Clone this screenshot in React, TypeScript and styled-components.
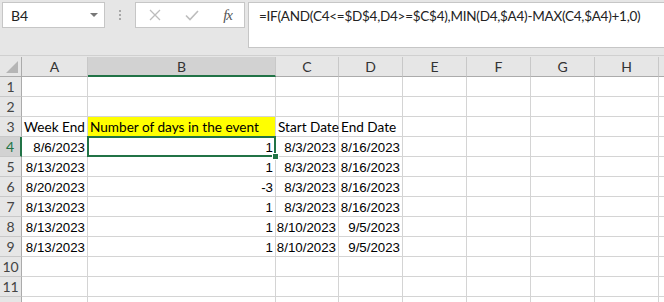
import styled, { createGlobalStyle, css } from 'styled-components';

const GlobalStyle = createGlobalStyle`
  html, body {
    margin: 0;
    padding: 0;
    background: #e6e6e6;
    overflow: hidden;
  }
`;

const CAL = `Lato, "Open Sans", sans-serif`;
const ARIAL = `"Liberation Sans", Arial, sans-serif`;

const COLS = ['A', 'B', 'C', 'D', 'E', 'F', 'G', 'H', ''];
const WIDTHS = '22px 66px 188px 63px 64px 64px 64px 64px 64px 64px';

type Row = { a?: string; b?: string; c?: string; d?: string; head?: boolean };

const rows: Row[] = [
  {},
  {},
  { a: 'Week End', b: 'Number of days in the event', c: 'Start Date', d: 'End Date', head: true },
  { a: '8/6/2023', b: '1', c: '8/3/2023', d: '8/16/2023' },
  { a: '8/13/2023', b: '1', c: '8/3/2023', d: '8/16/2023' },
  { a: '8/20/2023', b: '-3', c: '8/3/2023', d: '8/16/2023' },
  { a: '8/13/2023', b: '1', c: '8/3/2023', d: '8/16/2023' },
  { a: '8/13/2023', b: '1', c: '8/10/2023', d: '9/5/2023' },
  { a: '8/13/2023', b: '1', c: '8/10/2023', d: '9/5/2023' },
  {},
  {},
];

const Window = styled.div`
  width: 664px;
  height: 302px;
  overflow: hidden;
  background: #e6e6e6;
`;

/* ~~~ formula bar ~~~ */
const FormulaRow = styled.div`
  display: flex;
  align-items: flex-start;
  height: 56px;
  padding: 2px 0 0 2px;
  box-sizing: border-box;
  border-bottom: 1px solid #d0d0d0;
`;

const NameBox = styled.div`
  flex: none;
  width: 103px;
  height: 26px;
  box-sizing: border-box;
  background: #fff;
  border: 1px solid #c6c6c6;
  display: flex;
  align-items: center;
  justify-content: space-between;
  padding: 0 6px 0 8px;
  font: 14px ${CAL};
  color: #222;
`;

const Arrow = styled.span`
  width: 0;
  height: 0;
  border-left: 4px solid transparent;
  border-right: 4px solid transparent;
  border-top: 4px solid #777;
`;

const Grip = styled.div`
  flex: none;
  width: 30px;
  height: 26px;
  display: flex;
  flex-direction: column;
  align-items: center;
  justify-content: center;
  gap: 2px;

  span {
    width: 2px;
    height: 2px;
    background: #a8a8a8;
  }
`;

const ButtonBox = styled.div`
  flex: none;
  width: 110px;
  height: 26px;
  box-sizing: border-box;
  background: #fff;
  border: 1px solid #c6c6c6;
  display: flex;
  align-items: center;
  justify-content: space-between;
  padding: 0 12px 0 13px;
`;

const Fx = styled.span`
  font: italic 15px "Liberation Serif", serif;
  color: #555;
  letter-spacing: -1px;
`;

const FormulaInput = styled.div`
  flex: 1;
  min-width: 0;
  overflow: hidden;
  height: 46px;
  margin-left: 3px;
  box-sizing: border-box;
  background: #fff;
  border: 1px solid #c6c6c6;
  border-right: none;
  padding: 5px 0 0 10px;
  font: 13.5px ${CAL};
  letter-spacing: -0.25px;
  color: #222;
  white-space: nowrap;
`;

/* ~~~ sheet grid ~~~ */
const Sheet = styled.div`
  display: grid;
  grid-template-columns: ${WIDTHS};
  grid-auto-rows: 20px;
  margin-top: 1px;
`;

const Corner = styled.div`
  position: relative;
  background: #e6e6e6;
  border-right: 1px solid #ababab;
  border-bottom: 1px solid #ababab;

  &::after {
    content: '';
    position: absolute;
    right: 3px;
    bottom: 3px;
    width: 0;
    height: 0;
    border-left: 12px solid transparent;
    border-bottom: 12px solid #b5b5b5;
  }
`;

const ColHead = styled.div<{ $sel?: boolean }>`
  background: ${(p) => (p.$sel ? '#d2d2d2' : '#e6e6e6')};
  border-right: 1px solid #c8c8c8;
  border-bottom: ${(p) => (p.$sel ? '2px solid #217346' : '1px solid #ababab')};
  display: flex;
  align-items: center;
  justify-content: center;
  font: 14px ${CAL};
  color: #333;
  box-sizing: border-box;
  padding-top: ${(p) => (p.$sel ? '1px' : '0')};
`;

const RowHead = styled.div<{ $sel?: boolean }>`
  background: ${(p) => (p.$sel ? '#d2d2d2' : '#e6e6e6')};
  border-right: ${(p) => (p.$sel ? '2px solid #217346' : '1px solid #ababab')};
  border-bottom: 1px solid #c8c8c8;
  box-sizing: border-box;
  display: flex;
  align-items: flex-end;
  justify-content: center;
  padding-bottom: 1px;
  font: 14px ${CAL};
  color: ${(p) => (p.$sel ? '#217346' : '#444')};
`;

const Cell = styled.div<{ $num?: boolean; $label?: boolean; $fill?: string; $active?: boolean }>`
  position: relative;
  box-sizing: border-box;
  background: ${(p) => p.$fill || '#fff'};
  border-right: 1px solid #d4d4d4;
  border-bottom: 1px solid #d4d4d4;
  display: flex;
  align-items: flex-end;
  justify-content: ${(p) => (p.$num ? 'flex-end' : 'flex-start')};
  padding: 0 2px 1px 2px;
  white-space: nowrap;
  overflow: visible;
  color: #000;
  font: ${(p) => (p.$label ? `13.6px ${CAL}` : `13.3px ${ARIAL}`)};

  ${(p) =>
    p.$active &&
    css`
      &::after {
        content: '';
        position: absolute;
        left: -1px;
        top: -1px;
        right: -1px;
        bottom: -1px;
        border: 2px solid #217346;
        z-index: 2;
      }
      &::before {
        content: '';
        position: absolute;
        right: -4px;
        bottom: -4px;
        width: 5px;
        height: 5px;
        background: #217346;
        border: 1px solid #fff;
        z-index: 3;
      }
    `}
`;

const CellText = styled.span`
  position: relative;
  z-index: 1;
`;

function XIcon() {
  return (
    <svg width="12" height="12" viewBox="0 0 12 12">
      <path d="M1 1 L11 11 M11 1 L1 11" stroke="#bdbdbd" strokeWidth="1.3" fill="none" />
    </svg>
  );
}

function CheckIcon() {
  return (
    <svg width="14" height="11" viewBox="0 0 14 11">
      <path d="M1 5.5 L5 9.5 L13 1" stroke="#bdbdbd" strokeWidth="1.6" fill="none" />
    </svg>
  );
}

export default function App() {
  return (
    <Window>
      <GlobalStyle />
      <FormulaRow>
        <NameBox>
          B4
          <Arrow />
        </NameBox>
        <Grip>
          <span />
          <span />
          <span />
        </Grip>
        <ButtonBox>
          <XIcon />
          <CheckIcon />
          <Fx>fx</Fx>
        </ButtonBox>
        <FormulaInput>=IF(AND(C4&lt;=$D$4,D4&gt;=$C$4),MIN(D4,$A4)-MAX(C4,$A4)+1,0)</FormulaInput>
      </FormulaRow>
      <Sheet>
        <Corner />
        {COLS.map((c, i) => (
          <ColHead key={i} $sel={c === 'B'}>
            {c}
          </ColHead>
        ))}
        {rows.map((r, i) => {
          const n = i + 1;
          const num = !r.head;
          return [
            <RowHead key={`h${n}`} $sel={n === 4}>
              {n}
            </RowHead>,
            <Cell key={`a${n}`} $num={num} $label={r.head}>
              <CellText>{r.a}</CellText>
            </Cell>,
            <Cell key={`b${n}`} $num={num} $label={r.head} $fill={r.head ? '#ffff00' : undefined} $active={n === 4}>
              <CellText>{r.b}</CellText>
            </Cell>,
            <Cell key={`c${n}`} $num={num} $label={r.head}>
              <CellText>{r.c}</CellText>
            </Cell>,
            <Cell key={`d${n}`} $num={num} $label={r.head}>
              <CellText>{r.d}</CellText>
            </Cell>,
            ...['E', 'F', 'G', 'H', 'I'].map((c) => <Cell key={`${c}${n}`} />),
          ];
        })}
        {/* row 12 peeks in at the bottom edge */}
        <RowHead />
        {Array.from({ length: 9 }, (_, k) => (
          <Cell key={`r12-${k}`} />
        ))}
      </Sheet>
    </Window>
  );
}
